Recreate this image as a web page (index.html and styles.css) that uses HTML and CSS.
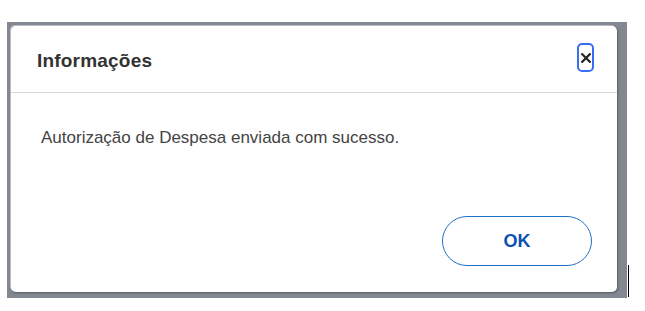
FILE: index.html
```html
<!DOCTYPE html>
<html lang="pt">
<head>
<meta charset="utf-8">
<title>Informações</title>
<link rel="stylesheet" href="styles.css">
</head>
<body>
<div class="stage">
  <div class="backdrop">
    <div class="dialog" role="dialog">
      <div class="dialog-header">
        <h1 class="dialog-title">Informações</h1>
        <button class="close-btn" aria-label="Fechar">
          <svg width="10" height="10" viewBox="0 0 10 10"><path d="M1.2 1.2 L8.8 8.8 M8.8 1.2 L1.2 8.8" stroke="#222" stroke-width="2.2" stroke-linecap="square"/></svg>
        </button>
      </div>
      <div class="dialog-body">
        <p class="message">Autorização de Despesa enviada com sucesso.</p>
      </div>
      <div class="dialog-footer">
        <button class="ok-btn">OK</button>
      </div>
    </div>
  </div>
  <div class="cursor-line"></div>
</div>
</body>
</html>
```
FILE: styles.css
```css
html, body {
  margin: 0;
  padding: 0;
  background: #ffffff;
}
body {
  font-family: "Liberation Sans", Arial, sans-serif;
}
.stage {
  display: flex;
  align-items: flex-end;
  padding: 22px 0 0 7px;
}
.backdrop {
  width: 620px;
  height: 276px;
  box-sizing: border-box;
  background: #83878f;
  padding: 4px 10px 6px 4px;
}
.dialog {
  width: 100%;
  height: 100%;
  box-sizing: border-box;
  background: #ffffff;
  border-radius: 5px;
  box-shadow: -1px -1px 0 #b9bcc2, 1px 1px 2px rgba(60,64,72,0.6);
  display: flex;
  flex-direction: column;
}
.dialog-header {
  height: 67px;
  box-sizing: border-box;
  border-bottom: 1px solid #d9d9d9;
  display: flex;
  align-items: center;
  justify-content: space-between;
  padding: 0 23px 0 26px;
}
.dialog-title {
  margin: 4px 0 0 0;
  font-size: 19px;
  font-weight: bold;
  color: #333333;
  letter-spacing: 0.2px;
}
.close-btn {
  width: 17px;
  height: 29px;
  box-sizing: border-box;
  border: 2px solid #3a6ef2;
  border-radius: 5px;
  background: #ffffff;
  padding: 0;
  display: flex;
  align-items: center;
  justify-content: center;
  margin-top: -3px;
}
.dialog-body {
  flex: 1;
  padding: 0 30px;
}
.message {
  margin: 35px 0 0 0;
  font-size: 17px;
  color: #444444;
}
.dialog-footer {
  display: flex;
  justify-content: flex-end;
  padding: 0 25px 26px 0;
}
.ok-btn {
  width: 150px;
  height: 50px;
  box-sizing: border-box;
  border: 1.5px solid #1f6fc8;
  border-radius: 25px;
  background: #ffffff;
  color: #0d4fb3;
  font-family: "Liberation Sans", Arial, sans-serif;
  font-size: 18px;
  font-weight: bold;
}
.cursor-line {
  width: 1px;
  height: 32px;
  background: #000000;
  margin: 0 0 1px 1px;
}
```
